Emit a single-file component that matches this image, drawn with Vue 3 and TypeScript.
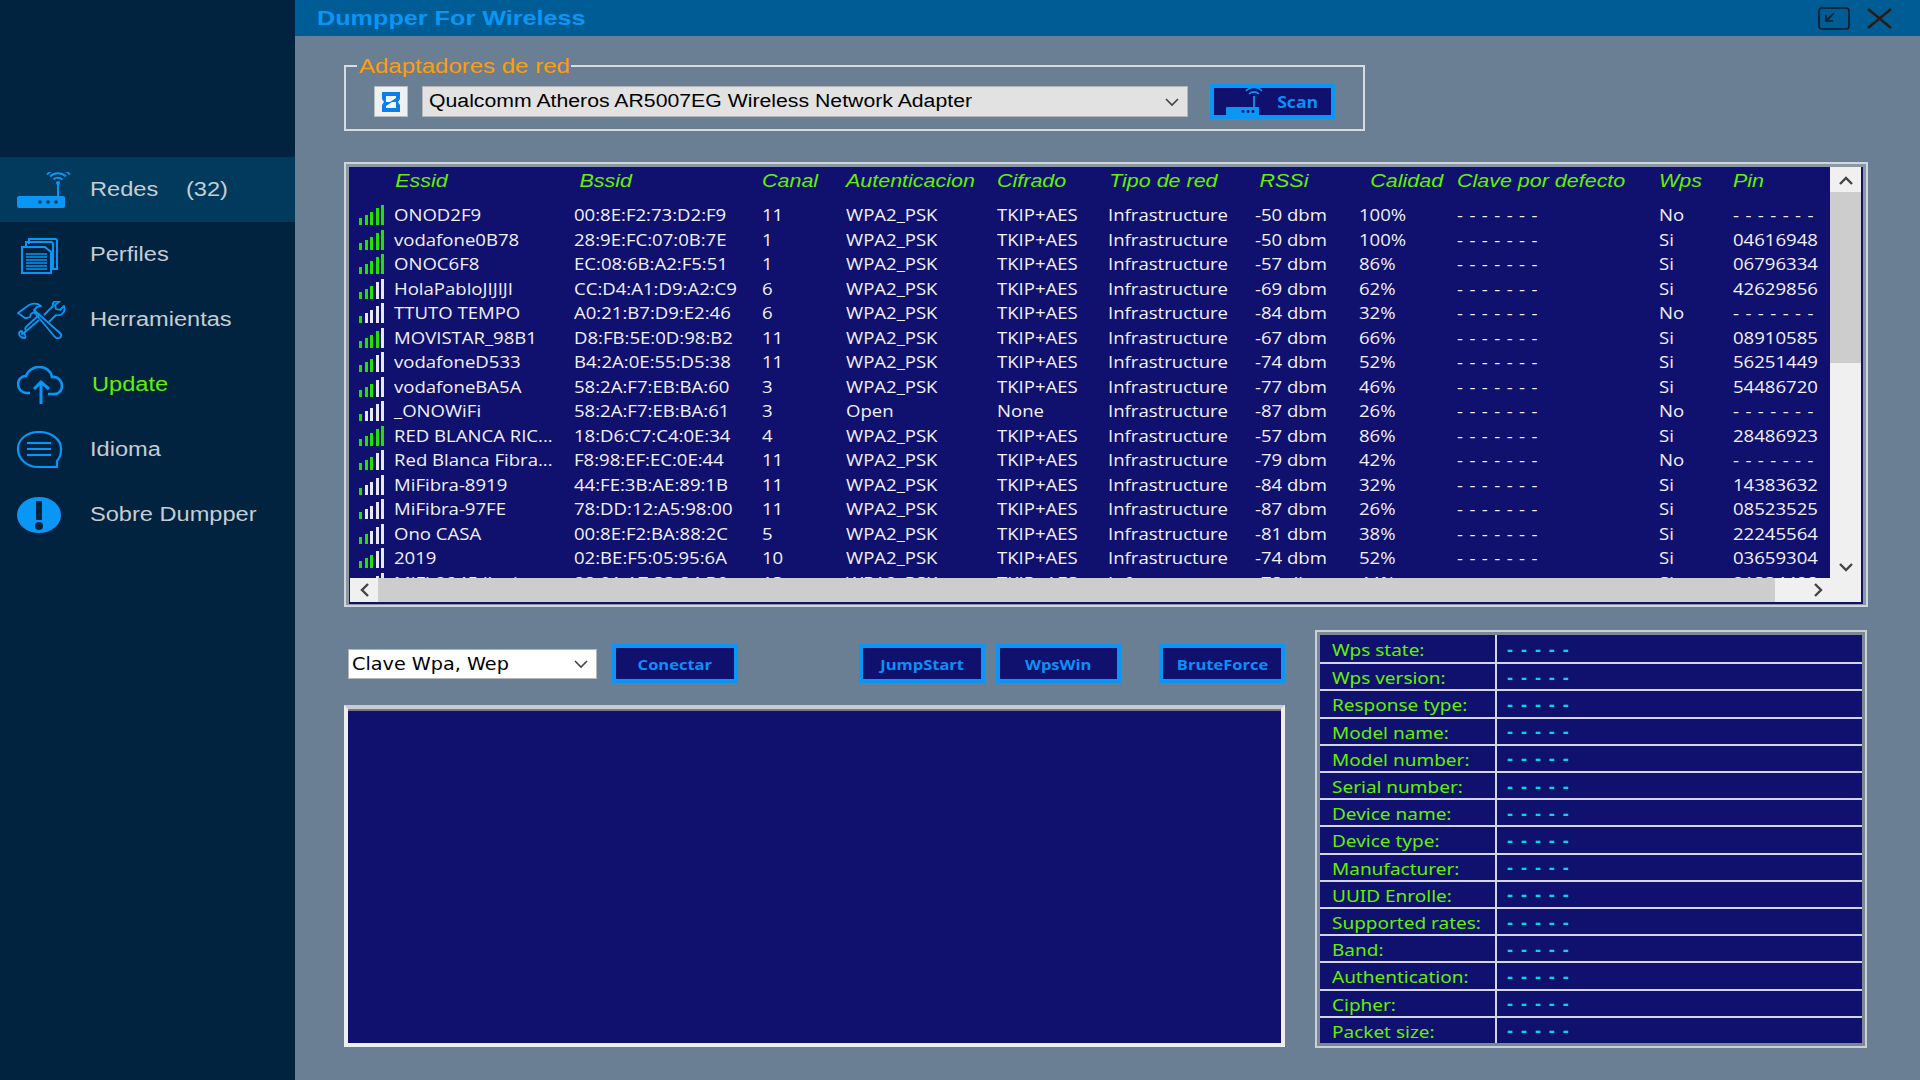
<template>
  <div class="app">
    <!-- sidebar -->
    <aside class="sidebar">
      <nav class="menu">
        <div class="menu-item active">
          <svg class="menu-icon" width="56" height="36" viewBox="0 0 56 36">
            <rect x="0" y="24" width="48" height="12" rx="2" fill="#0a96f5" />
            <circle cx="23" cy="30" r="1.8" fill="#013a5c" />
            <circle cx="31" cy="30" r="1.8" fill="#013a5c" />
            <circle cx="39" cy="30" r="1.8" fill="#013a5c" />
            <path d="M41 24V12" stroke="#0a96f5" stroke-width="2" />
            <circle cx="41" cy="11" r="2" fill="#0a96f5" />
            <path d="M36.500 7.500a6.500 6.500 0 0 1 9 0M33 4.500a11.500 11.500 0 0 1 16 0M30 2.500a16 16 0 0 1 23 0" fill="none" stroke="#0a96f5" stroke-width="1.800" />
          </svg>
          <span class="menu-text">Redes</span>
          <span class="menu-text menu-count">(32)</span>
        </div>
        <div class="menu-item">
          <svg class="menu-icon" width="56" height="38" viewBox="0 0 56 38" fill="none" stroke="#0a96f5" stroke-width="2">
            <path d="M12 8V3h26q2 0 2 2v28h-4" />
            <path d="M9 11V6h25q2 0 2 2v26" />
            <path d="M5 11h23l6 5v21H5z" fill="#012340" />
            <path d="M9 18h21M9 21h21M9 24h21M9 27h21M9 30h21M9 33h21" stroke-width="1.6" />
          </svg>
          <span class="menu-text">Perfiles</span>
        </div>
        <div class="menu-item">
          <svg class="menu-icon" width="56" height="38" viewBox="0 0 56 38" fill="none" stroke="#0a96f5" stroke-width="1.8" stroke-linejoin="round">
            <path d="M1 12l11-8q7-3 12 1l-4 1-3 3 27 24q1 3-2 4-2 1-4-1L17 11l-3 2-1 3-3 1-2 0z" />
            <path d="M22 19L8 31q-1 2 0 3t0 3q-5 0-6-4 0-3 3-3l0 3 4-3q-2-3 1-5l13-12" />
            <path d="M27 14l9-9q-1-5 5-5l2 0-5 4 1 4 4 1 4-4q2 5-2 8-3 2-6 1l-7 7" />
          </svg>
          <span class="menu-text">Herramientas</span>
        </div>
        <div class="menu-item">
          <svg class="menu-icon" width="56" height="38" viewBox="0 0 56 38" fill="none" stroke="#0a96f5" stroke-width="2.6">
            <path d="M13 27H10C4 27 1 22 1 18c0-5 4-8 8-8 2-6 8-9 13-9 7 0 12 4 13 10 6-1 10 4 10 9s-4 9-10 8H31" />
            <path d="M17 23l7-7 8 7M24 17v21" stroke-width="3" />
          </svg>
          <span class="menu-text update">Update</span>
        </div>
        <div class="menu-item">
          <svg class="menu-icon" width="56" height="38" viewBox="0 0 56 38" fill="none" stroke="#0a96f5" stroke-width="2.2">
            <path d="M22 1C10 1 1 8 1 18s9 18 20 18h19v-6c3-3 4-7 4-12C44 8 34 1 22 1z" />
            <path d="M10 12h24M10 18h24M10 24h24" />
          </svg>
          <span class="menu-text">Idioma</span>
        </div>
        <div class="menu-item">
          <svg class="menu-icon" width="56" height="38" viewBox="0 0 56 38">
            <ellipse cx="22" cy="19" rx="22" ry="18" fill="#0a96f5" />
            <rect x="19" y="5" width="6" height="19" fill="#012340" />
            <circle cx="22" cy="30" r="4" fill="#012340" />
          </svg>
          <span class="menu-text">Sobre Dumpper</span>
        </div>
      </nav>
    </aside>

    <div class="window">
      <!-- title bar -->
      <header class="titlebar">
        <span class="title">Dumpper For Wireless</span>
        <div class="title-actions">
          <svg width="32" height="23" viewBox="0 0 32 23" fill="none" stroke="#0b1a28" stroke-width="1.6">
            <rect x="1" y="1" width="30" height="21" rx="3" />
            <path d="M16 6l-8 8M8 8v6h7" />
          </svg>
          <svg width="25" height="21" viewBox="0 0 25 21" fill="none" stroke="#2a1a14" stroke-width="2.4">
            <path d="M1 1l23 19M24 1L1 20" />
          </svg>
        </div>
      </header>

      <main class="content">
        <!-- adapters -->
        <fieldset class="adapters">
          <legend><span class="legend-text">Adaptadores de red</span></legend>
          <div class="adapter-icon">
            <svg width="24" height="24" viewBox="0 0 24 24">
              <path d="M3 2h18v7l-2 3 2 3v7H3v-7l2-3-2-3z" fill="#0a7fe8" />
              <path d="M7 6h10v2l-6 4h6v6H7v-2l6-4H7z" fill="#f4f7fb" />
            </svg>
          </div>
          <div class="adapter-select">
            <span class="adapter-name">Qualcomm Atheros AR5007EG Wireless Network Adapter</span>
            <svg width="14" height="10" viewBox="0 0 14 10" fill="none" stroke="#444" stroke-width="1.6">
              <path d="M1 2l6 6 6-6" />
            </svg>
          </div>
          <button class="btn scan-btn">
            <svg width="36" height="28" viewBox="0 0 36 28">
              <rect x="0" y="19" width="33" height="9" rx="1" fill="#0a96f5" />
              <circle cx="17" cy="23.500" r="1.400" fill="#10106e" />
              <circle cx="22" cy="23.500" r="1.400" fill="#10106e" />
              <circle cx="27" cy="23.500" r="1.400" fill="#10106e" />
              <path d="M28 19V8" stroke="#0a96f5" stroke-width="1.800" />
              <path d="M23 6a7 7 0 0 1 10 0M20 3a11 11 0 0 1 16 0" fill="none" stroke="#0a96f5" stroke-width="1.600" />
            </svg>
            <span class="btn-text scan-text">Scan</span>
          </button>
        </fieldset>

        <!-- networks table -->
        <section class="table-frame">
          <div class="table-inner">
            <div class="table-view">
              <div class="grid-row table-head">
                <span></span>
                <span v-for="h in headers" :key="h" class="head-cell">{{ h }}</span>
              </div>
              <div class="table-body">
                <div v-for="n in networks" :key="n.bssid" class="grid-row net-row">
                  <span class="bars">
                    <i v-for="b in 5" :key="b" :class="{ on: b <= greenBars(n.quality) }"></i>
                  </span>
                  <span class="cell">{{ n.essid }}</span>
                  <span class="cell bssid">{{ n.bssid }}</span>
                  <span class="cell">{{ n.channel }}</span>
                  <span class="cell">{{ n.auth }}</span>
                  <span class="cell">{{ n.cipher }}</span>
                  <span class="cell">Infrastructure</span>
                  <span class="cell">{{ n.rssi }} dbm</span>
                  <span class="cell">{{ n.quality }}%</span>
                  <span class="cell dashes">{{ NO_PIN }}</span>
                  <span class="cell">{{ n.wps }}</span>
                  <span class="cell" :class="{ dashes: n.pin === NO_PIN }">{{ n.pin }}</span>
                </div>
              </div>
            </div>
            <div class="vscroll">
              <svg width="14" height="10" viewBox="0 0 14 10" fill="none" stroke="#444" stroke-width="2.4"><path d="M1 8l6-6 6 6" /></svg>
              <div class="vthumb"></div>
              <svg class="vdown" width="14" height="10" viewBox="0 0 14 10" fill="none" stroke="#444" stroke-width="2.4"><path d="M1 2l6 6 6-6" /></svg>
            </div>
            <div class="hscroll">
              <svg width="10" height="14" viewBox="0 0 10 14" fill="none" stroke="#444" stroke-width="2.4"><path d="M8 1L2 7l6 6" /></svg>
              <div class="hthumb"></div>
              <svg width="10" height="14" viewBox="0 0 10 14" fill="none" stroke="#444" stroke-width="2.4"><path d="M2 1l6 6-6 6" /></svg>
            </div>
            <div class="corner"></div>
          </div>
        </section>

        <!-- lower part -->
        <section class="lower">
          <div class="lower-left">
            <div class="actions">
              <div class="key-select">
                <span class="key-text">Clave Wpa, Wep</span>
                <svg width="14" height="10" viewBox="0 0 14 10" fill="none" stroke="#444" stroke-width="1.600"><path d="M1 2l6 6 6-6" /></svg>
              </div>
              <button class="btn action-btn btn-connect"><span class="btn-text">Conectar</span></button>
              <button class="btn action-btn btn-jump"><span class="btn-text">JumpStart</span></button>
              <button class="btn action-btn btn-wps"><span class="btn-text">WpsWin</span></button>
              <button class="btn action-btn btn-brute"><span class="btn-text">BruteForce</span></button>
            </div>
            <div class="log"></div>
          </div>

          <div class="info">
            <div class="info-inner">
              <div v-for="label in infoLabels" :key="label" class="info-row">
                <span class="info-label"><span>{{ label }}</span></span>
                <span class="info-value">- - - - -</span>
              </div>
            </div>
          </div>
        </section>
      </main>
    </div>
  </div>
</template>

<script setup lang="ts">
interface Network {
  essid: string
  bssid: string
  channel: number
  auth: string
  cipher: string
  rssi: number
  quality: number
  wps: string
  pin: string
}

const headers = [
  'Essid',
  'Bssid',
  'Canal',
  'Autenticacion',
  'Cifrado',
  'Tipo de red',
  'RSSi',
  'Calidad',
  'Clave por defecto',
  'Wps',
  'Pin'
]

const NO_PIN = '- - - - - - -'

const networks: Network[] = [
  { essid: 'ONOD2F9', bssid: '00:8E:F2:73:D2:F9', channel: 11, auth: 'WPA2_PSK', cipher: 'TKIP+AES', rssi: -50, quality: 100, wps: 'No', pin: NO_PIN },
  { essid: 'vodafone0B78', bssid: '28:9E:FC:07:0B:7E', channel: 1, auth: 'WPA2_PSK', cipher: 'TKIP+AES', rssi: -50, quality: 100, wps: 'Si', pin: '04616948' },
  { essid: 'ONOC6F8', bssid: 'EC:08:6B:A2:F5:51', channel: 1, auth: 'WPA2_PSK', cipher: 'TKIP+AES', rssi: -57, quality: 86, wps: 'Si', pin: '06796334' },
  { essid: 'HolaPabloJIJIJI', bssid: 'CC:D4:A1:D9:A2:C9', channel: 6, auth: 'WPA2_PSK', cipher: 'TKIP+AES', rssi: -69, quality: 62, wps: 'Si', pin: '42629856' },
  { essid: 'TTUTO TEMPO', bssid: 'A0:21:B7:D9:E2:46', channel: 6, auth: 'WPA2_PSK', cipher: 'TKIP+AES', rssi: -84, quality: 32, wps: 'No', pin: NO_PIN },
  { essid: 'MOVISTAR_98B1', bssid: 'D8:FB:5E:0D:98:B2', channel: 11, auth: 'WPA2_PSK', cipher: 'TKIP+AES', rssi: -67, quality: 66, wps: 'Si', pin: '08910585' },
  { essid: 'vodafoneD533', bssid: 'B4:2A:0E:55:D5:38', channel: 11, auth: 'WPA2_PSK', cipher: 'TKIP+AES', rssi: -74, quality: 52, wps: 'Si', pin: '56251449' },
  { essid: 'vodafoneBA5A', bssid: '58:2A:F7:EB:BA:60', channel: 3, auth: 'WPA2_PSK', cipher: 'TKIP+AES', rssi: -77, quality: 46, wps: 'Si', pin: '54486720' },
  { essid: '_ONOWiFi', bssid: '58:2A:F7:EB:BA:61', channel: 3, auth: 'Open', cipher: 'None', rssi: -87, quality: 26, wps: 'No', pin: NO_PIN },
  { essid: 'RED BLANCA RIC...', bssid: '18:D6:C7:C4:0E:34', channel: 4, auth: 'WPA2_PSK', cipher: 'TKIP+AES', rssi: -57, quality: 86, wps: 'Si', pin: '28486923' },
  { essid: 'Red Blanca Fibra...', bssid: 'F8:98:EF:EC:0E:44', channel: 11, auth: 'WPA2_PSK', cipher: 'TKIP+AES', rssi: -79, quality: 42, wps: 'No', pin: NO_PIN },
  { essid: 'MiFibra-8919', bssid: '44:FE:3B:AE:89:1B', channel: 11, auth: 'WPA2_PSK', cipher: 'TKIP+AES', rssi: -84, quality: 32, wps: 'Si', pin: '14383632' },
  { essid: 'MiFibra-97FE', bssid: '78:DD:12:A5:98:00', channel: 11, auth: 'WPA2_PSK', cipher: 'TKIP+AES', rssi: -87, quality: 26, wps: 'Si', pin: '08523525' },
  { essid: 'Ono CASA', bssid: '00:8E:F2:BA:88:2C', channel: 5, auth: 'WPA2_PSK', cipher: 'TKIP+AES', rssi: -81, quality: 38, wps: 'Si', pin: '22245564' },
  { essid: '2019', bssid: '02:BE:F5:05:95:6A', channel: 10, auth: 'WPA2_PSK', cipher: 'TKIP+AES', rssi: -74, quality: 52, wps: 'Si', pin: '03659304' },
  { essid: 'MiFi-2945 lluvia', bssid: '98:01:A7:33:84:B0', channel: 13, auth: 'WPA2_PSK', cipher: 'TKIP+AES', rssi: -78, quality: 44, wps: 'Si', pin: '21334428' }
]

const infoLabels = [
  'Wps state:',
  'Wps version:',
  'Response type:',
  'Model name:',
  'Model number:',
  'Serial number:',
  'Device name:',
  'Device type:',
  'Manufacturer:',
  'UUID Enrolle:',
  'Supported rates:',
  'Band:',
  'Authentication:',
  'Cipher:',
  'Packet size:'
]

function greenBars(quality: number): number {
  if (quality >= 80) return 5
  if (quality >= 66) return 4
  if (quality >= 42) return 3
  if (quality >= 38) return 2
  return 1
}
</script>

<style>
html,
body {
  margin: 0;
  overflow: hidden;
  background: #6a7f93;
}
</style>

<style scoped>
.app {
  display: flex;
  width: 1920px;
  height: 1080px;
  overflow: hidden;
  background: #6a7f93;
  font-family: 'Liberation Sans', Arial, sans-serif;
}

/* sidebar */
.sidebar {
  flex: 0 0 295px;
  background: #012340;
  padding-top: 157px;
  box-sizing: border-box;
}

.menu-item {
  display: flex;
  align-items: center;
  height: 65px;
  padding-left: 17px;
}

.menu-item.active {
  background: #013a5c;
}

.menu-icon {
  flex: none;
  margin-right: 17px;
}

.menu-text {
  display: inline-block;
  font-size: 20px;
  color: #c6cdd2;
  white-space: nowrap;
  transform: scaleX(1.18);
  transform-origin: left center;
}

.menu-count {
  margin-left: 38px;
}

.update {
  color: #62f000;
  margin-left: 2px;
}

/* main window */
.window {
  flex: 1;
  display: flex;
  flex-direction: column;
  min-width: 0;
}

.titlebar {
  display: flex;
  align-items: center;
  justify-content: space-between;
  height: 36px;
  flex: none;
  padding: 0 28px 0 22px;
  background: #005c94;
}

.title {
  font-size: 21px;
  font-weight: 700;
  color: #0a96f5;
  transform: scaleX(1.2);
  transform-origin: left center;
  white-space: nowrap;
}

.title-actions {
  display: flex;
  align-items: center;
  gap: 17px;
}

.content {
  flex: 1;
  display: flex;
  flex-direction: column;
  padding: 20px 52px 0 49px;
  min-height: 0;
}

/* adapters group */
.adapters {
  display: flex;
  align-items: center;
  width: 1021px;
  height: 75px;
  margin: 0;
  padding: 8px 0 7px 28px;
  box-sizing: border-box;
  border: 2px solid #d6dce0;
  min-width: 0;
  flex: none;
}

.adapters legend {
  width: 214px;
  margin-left: -17px;
  padding: 0 0 0 2px;
  box-sizing: border-box;
  line-height: 20px;
  font-size: 20px;
  color: #ff9d0a;
}

.legend-text {
  display: inline-block;
  white-space: nowrap;
  transform: scaleX(1.2);
  transform-origin: left center;
}

.adapter-icon {
  display: flex;
  align-items: center;
  justify-content: center;
  width: 34px;
  height: 31px;
  background: #eef1f4;
  border: 1px solid #b8bcc0;
  box-sizing: border-box;
}

.adapter-select {
  display: flex;
  align-items: center;
  justify-content: space-between;
  width: 766px;
  height: 31px;
  margin-left: 14px;
  padding: 0 8px 0 6px;
  box-sizing: border-box;
  background: #e2e2e2;
  border: 1px solid #b2b6b8;
}

.adapter-name {
  font-size: 18px;
  color: #000;
  white-space: nowrap;
  transform: scaleX(1.18);
  transform-origin: left center;
}

.btn {
  display: flex;
  align-items: center;
  justify-content: center;
  box-sizing: border-box;
  padding: 0;
  background: #10106e;
  border: 4px solid #0a96f5;
  font-family: 'Open Sans', sans-serif;
  font-size: 15px;
  font-weight: 700;
  color: #0a90f8;
  cursor: pointer;
}

.btn-text {
  display: inline-block;
  white-space: nowrap;
  transform: scaleX(1.1);
}

.scan-btn {
  width: 125px;
  height: 35px;
  margin-left: 22px;
  gap: 17px;
  padding-right: 2px;
}

.scan-text {
  font-size: 16px;
}

/* networks table */
.table-frame {
  flex: none;
  height: 445px;
  margin-top: 31px;
  box-sizing: border-box;
  border: 2px solid #cfd6db;
  background: #8b98a4;
  padding: 3px 3px 1px 3px;
}

.table-inner {
  display: grid;
  grid-template-columns: 1fr 31px;
  grid-template-rows: 1fr 24px;
  height: 100%;
  box-sizing: border-box;
  border: solid #10106e;
  border-width: 0 2px 2px 1px;
  background: #10106e;
}

.table-view {
  overflow: hidden;
  min-width: 0;
}

.grid-row {
  display: grid;
  grid-template-columns: 35px 181px 187px 84px 151px 111px 147px 104px 98px 202px 74px 60px;
  padding-left: 9px;
}

.table-head {
  height: 36px;
  padding-bottom: 8px;
  box-sizing: border-box;
  align-items: center;
  font-size: 19px;
  font-style: italic;
  color: #62f000;
}

.head-cell {
  display: inline-block;
  white-space: nowrap;
  transform: scaleX(1.13);
  transform-origin: left center;
}

.head-cell:nth-child(2) {
  padding-left: 1px;
}

.head-cell:nth-child(3) {
  padding-left: 4px;
}

.head-cell:nth-child(7) {
  padding-left: 1px;
}

.head-cell:nth-child(8) {
  padding-left: 4px;
}

.head-cell:nth-child(9) {
  padding-left: 10px;
}

.net-row {
  height: 24.5px;
  align-items: center;
  font-family: 'Open Sans', sans-serif;
  font-size: 16px;
  font-weight: 500;
  color: #f2f2f6;
}

.cell {
  display: inline-block;
  white-space: nowrap;
  transform: scaleX(1.16);
  transform-origin: left center;
}

.cell.bssid {
  margin-left: -1px;
}

.dashes {
  word-spacing: 1.4px;
}

.bars {
  display: flex;
  align-items: flex-end;
  gap: 2.500px;
  height: 20px;
}

.bars i {
  display: block;
  width: 3px;
  background: #e8e8f0;
}

.bars i.on {
  background: #22e000;
}

.bars i:nth-child(1) {
  height: 7px;
}

.bars i:nth-child(2) {
  height: 10px;
}

.bars i:nth-child(3) {
  height: 13px;
}

.bars i:nth-child(4) {
  height: 17px;
}

.bars i:nth-child(5) {
  height: 20px;
}

/* scrollbars */
.vscroll {
  display: flex;
  flex-direction: column;
  align-items: center;
  background: #f0f0f0;
  padding-top: 9px;
  box-sizing: border-box;
}

.vthumb {
  flex: none;
  width: 100%;
  height: 171px;
  margin-top: 6px;
  background: #cdcdcd;
}

.vdown {
  margin-top: auto;
  margin-bottom: 6px;
}

.hscroll {
  display: flex;
  align-items: center;
  background: #f0f0f0;
  padding: 0 0 0 10px;
}

.hthumb {
  flex: none;
  width: 1397px;
  height: 100%;
  margin-left: 8px;
  margin-right: 38px;
  background: #cdcdcd;
}

.corner {
  background: #f0f0f0;
}

/* lower part */
.lower {
  display: flex;
  margin-top: 23px;
  height: 418px;
  gap: 30px;
  flex: none;
}

.lower-left {
  display: flex;
  flex-direction: column;
  width: 941px;
}

.actions {
  display: flex;
  align-items: center;
  height: 39px;
  margin-top: 14px;
  padding-left: 4px;
}

.key-select {
  display: flex;
  align-items: center;
  justify-content: space-between;
  box-sizing: border-box;
  width: 250px;
  height: 30px;
  padding: 0 8px 0 3px;
  background: #fff;
  border: 1px solid #b2b6b8;
}

.key-text {
  font-family: 'DejaVu Sans', sans-serif;
  font-size: 17px;
  color: #000;
  white-space: nowrap;
  transform-origin: left center;
  transform: scaleX(1.13);
}

.action-btn {
  width: 126px;
  height: 39px;
}

.btn-connect {
  margin-left: 15px;
}

.btn-jump {
  margin-left: 121px;
}

.btn-wps {
  margin-left: 11px;
}

.btn-brute {
  margin-left: 38px;
}

.log {
  flex: none;
  height: 342px;
  margin-top: 22px;
  box-sizing: border-box;
  background: #10106e;
  border: 4px solid #eceef0;
  border-top-color: #c6ccd2;
  box-shadow: inset 0 2px 0 #77797c;
}

.info {
  flex: none;
  width: 552px;
  box-sizing: border-box;
  border: 2px solid #c8cfd5;
  padding: 3px;
  height: 418px;
  background: #7c8894;
}

.info-inner {
  display: grid;
  grid-template-rows: repeat(15, 1fr);
  height: 100%;
  background: #10106e;
}

.info-row {
  display: grid;
  grid-template-columns: 177px 1fr;
  align-items: center;
  border-top: 2px solid #d4d6e4;
  min-height: 0;
}

.info-row:first-child {
  border-top: none;
}

.info-label {
  display: flex;
  align-items: center;
  height: 100%;
  padding: 2px 0 0 12px;
  box-sizing: border-box;
  border-right: 2px solid #d4d6e4;
  font-family: 'Noto Sans', sans-serif;
  font-size: 17px;
  color: #62f000;
  white-space: nowrap;
}

.info-label span {
  display: inline-block;
  transform: scaleX(1.117);
  transform-origin: left center;
}

.info-value {
  padding: 2px 0 0 10px;
  font-family: 'DejaVu Sans', sans-serif;
  font-size: 15px;
  font-weight: 700;
  color: #00d8f0;
  white-space: nowrap;
  word-spacing: 2.5px;
}
</style>
